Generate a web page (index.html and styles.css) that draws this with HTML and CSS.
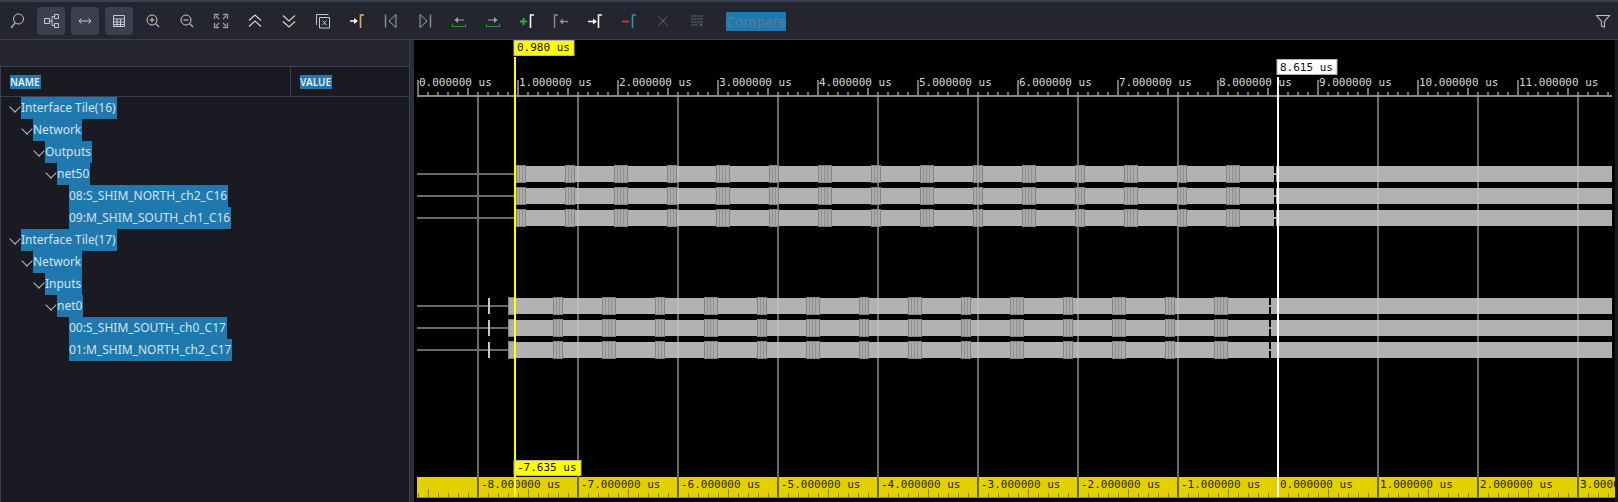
FILE: index.html
```html
<!DOCTYPE html>
<html lang="en">

<head>
    <meta charset="UTF-8">
    <meta name="viewport" content="width=device-width, initial-scale=1.0">
    <title>Waveform</title>
    <link rel="stylesheet" href="styles.css">
</head>

<body>
    <div class="app">
        <div class="toolbar">
            <button class="tool"><svg viewBox="0 0 20 20"><circle class="ic" cx="11.500" cy="8" r="5"/><path class="ic-blue" d="M8 12 4 17"/></svg></button>
            <button class="tool on"><svg viewBox="0 0 20 20"><path class="ic" d="M3.500 7.500h5v5h-5zM13.500 3.500h4v4h-4zM13.500 12.500h4v4h-4zM8.500 10h2.500M11 5.500h2.500M11 14.500h2.500M11 5.500v9"/></svg></button>
            <button class="tool on"><svg viewBox="0 0 20 20"><path class="ic" d="M4 10h12M6.500 7.500 4 10l2.500 2.500M13.500 7.500 16 10l-2.500 2.500"/></svg></button>
            <button class="tool on"><svg viewBox="0 0 20 20"><path class="ic" d="M4.500 4.500h11v11h-11zM4.500 8h11M4.500 11h11M4.500 13.500h11M8 8v7.500M11.500 8v7.500"/></svg></button>
            <button class="tool"><svg viewBox="0 0 20 20"><circle class="ic" cx="9" cy="9" r="5"/><path class="ic-orange" d="M6.500 9h5M9 6.500v5"/><path class="ic-blue" d="m12.500 12.500 3.500 3.500"/></svg></button>
            <button class="tool"><svg viewBox="0 0 20 20"><circle class="ic" cx="9" cy="9" r="5"/><path class="ic-orange" d="M6.500 9h5"/><path class="ic-blue" d="m12.500 12.500 3.500 3.500"/></svg></button>
            <button class="tool"><svg viewBox="0 0 20 20"><path class="ic-fit" d="M3.500 8V3.500H8M12 3.500h4.500V8M16.500 12v4.500H12M8 16.500H3.500V12M5 5l3 3M15 5l-3 3M15 15l-3-3M5 15l3-3"/></svg></button>
            <button class="tool"><svg viewBox="0 0 20 20"><path class="ic-cream" d="m4 9.500 6-5.500 6 5.500M4 15.500l6-5.500 6 5.500"/></svg></button>
            <button class="tool"><svg viewBox="0 0 20 20"><path class="ic-cream" d="m4 4.500 6 5.500 6-5.500M4 10.500l6 5.500 6-5.500"/></svg></button>
            <button class="tool"><svg viewBox="0 0 20 20"><path class="ic" d="M3.500 14V3.500h12M6.500 6.500h10v10.500h-10zM9.500 9.500l4 4.500M13.500 9.500l-4 4.500"/></svg></button>
            <button class="tool"><svg viewBox="0 0 20 20"><path class="ic-white" d="M3 10h5"/><path class="fill-white" d="m7 7 4 3-4 3z"/><path class="ic-gold" d="M13.500 17V4h3.500"/></svg></button>
            <button class="tool"><svg viewBox="0 0 20 20"><path class="ic-grey" d="M4.500 3.500v13"/><path class="ic-dim" d="M15 3.500v13L8 10z"/></svg></button>
            <button class="tool"><svg viewBox="0 0 20 20"><path class="ic-grey" d="M15.500 3.500v13"/><path class="ic-dim" d="M5 3.500v13L12 10z"/></svg></button>
            <button class="tool"><svg viewBox="0 0 20 20"><path class="ic-green" d="M3.500 12.500v3h13v-3"/><path class="ic-dim" d="M8 9h7"/><path class="fill-dim" d="M9 6 5.500 9 9 12z"/></svg></button>
            <button class="tool"><svg viewBox="0 0 20 20"><path class="ic-green" d="M3.500 12.500v3h13v-3"/><path class="ic-dim" d="M5 9h7"/><path class="fill-dim" d="m11 6 3.500 3-3.500 3z"/></svg></button>
            <button class="tool"><svg viewBox="0 0 20 20"><path class="ic-add" d="M3 10.500h7M6.500 7v7"/><path class="ic-white" d="M13.500 17V4h3.500"/></svg></button>
            <button class="tool"><svg viewBox="0 0 20 20"><path class="ic-grey" d="M3.500 17V4H7"/><path class="ic-grey" d="M10 10.500h7"/><path class="fill-grey" d="M12 7.500 8.500 10.500l3.500 3z"/></svg></button>
            <button class="tool"><svg viewBox="0 0 20 20"><path class="ic-white" d="M3 10.500h6"/><path class="fill-white" d="m8 7.500 4 3-4 3z"/><path class="ic-white" d="M13.500 17V4h3.500"/></svg></button>
            <button class="tool"><svg viewBox="0 0 20 20"><path class="ic-red" d="M3 10.500h7"/><path class="ic-teal" d="M13.500 17V4h3.500"/></svg></button>
            <button class="tool"><svg viewBox="0 0 20 20"><path class="ic-off" d="m5.500 5.500 9 9M14.500 5.500l-9 9"/></svg></button>
            <button class="tool"><svg viewBox="0 0 20 20"><path class="ic-off" d="M4 5h12M4 8h12M4 11h12M4 14h7M12.500 12.500l3 3M15.500 12.500l-3 3"/></svg></button>
            <span class="compare">Compare</span>
            <button class="tool filter"><svg viewBox="0 0 20 20"><path class="ic-filter" d="M3.500 4.500h13L11.500 10.500v5.500l-3-1v-4.500z"/></svg></button>
        </div>

        <div class="main">
            <div class="left">
                <div class="table-head">
                    <div class="col-name"><span class="sel">NAME</span></div>
                    <div class="col-value"><span class="sel">VALUE</span></div>
                </div>
                <div class="tree">
                    <div class="row lv0"><i class="chev"></i><span class="sel">Interface Tile(16)</span></div>
                    <div class="row lv1"><i class="chev"></i><span class="sel">Network</span></div>
                    <div class="row lv2"><i class="chev"></i><span class="sel">Outputs</span></div>
                    <div class="row lv3"><i class="chev"></i><span class="sel">net50</span></div>
                    <div class="row lv4"><span class="sel">08:S_SHIM_NORTH_ch2_C16</span></div>
                    <div class="row lv4"><span class="sel">09:M_SHIM_SOUTH_ch1_C16</span></div>
                    <div class="row lv0"><i class="chev"></i><span class="sel">Interface Tile(17)</span></div>
                    <div class="row lv1"><i class="chev"></i><span class="sel">Network</span></div>
                    <div class="row lv2"><i class="chev"></i><span class="sel">Inputs</span></div>
                    <div class="row lv3"><i class="chev"></i><span class="sel">net0</span></div>
                    <div class="row lv4"><span class="sel">00:S_SHIM_SOUTH_ch0_C17</span></div>
                    <div class="row lv4"><span class="sel">01:M_SHIM_NORTH_ch2_C17</span></div>
                </div>
            </div>
            <div class="gutter"></div>

            <!-- viewBox uses page coordinates, easier to check against the screenshot -->
            <svg class="wave" viewBox="414 40 1201 462" width="1201" height="462">
                <defs>
                    <pattern id="ticks-top" x="417" y="80" width="100" height="16" patternUnits="userSpaceOnUse">
                        <path class="tick-top" d="M1 0v16M11 12v4M21 12v4M31 12v4M41 12v4M51 8v8M61 12v4M71 12v4M81 12v4M91 12v4"/>
                    </pattern>
                    <pattern id="ticks-bottom" x="418" y="489" width="100" height="8" patternUnits="userSpaceOnUse">
                        <path class="tick-bottom" d="M.5 4v4M10.500 0v8M20.500 4v4M30.500 4v4M40.500 4v4M50.500 4v4M60.500 4v4M70.500 4v4M80.500 4v4M90.500 4v4"/>
                    </pattern>
                    <clipPath id="bottom-clip"><rect x="417" y="477" width="1198" height="20"/></clipPath>

                    <g id="c10">
                        <rect class="cl" x=".5" y="-.5" width="9" height="17"/>
                        <path class="cl-in" d="M3.500 0v16M6.500 0v16"/>
                    </g>
                    <g id="c14">
                        <rect class="cl" x=".5" y="-.5" width="13" height="17"/>
                        <path class="cl-in" d="M3.500 0v16M6.500 0v16M9.500 0v16"/>
                    </g>

                    <g id="row-a">
                        <rect class="sig" x="417" y="7" width="98" height="2"/>
                        <rect class="bar" x="516" y="0" width="758" height="16"/>
                        <rect class="bar" x="1274" y="7" width="2" height="2"/>
                        <rect class="bar" x="1276" y="0" width="336" height="16"/>
                        <path class="bar-grid" d="M578 0v16M678 0v16M778 0v16M878 0v16M978 0v16M1078 0v16M1178 0v16M1378 0v16M1478 0v16M1578 0v16"/>
                        <use href="#c10" x="516"/><use href="#c10" x="565"/><use href="#c14" x="614"/>
                        <use href="#c10" x="667"/><use href="#c14" x="716"/><use href="#c10" x="769"/>
                        <use href="#c14" x="818"/><use href="#c10" x="871"/><use href="#c14" x="920"/>
                        <use href="#c10" x="973"/><use href="#c14" x="1022"/><use href="#c10" x="1075"/>
                        <use href="#c14" x="1124"/><use href="#c10" x="1177"/><use href="#c14" x="1226"/>
                    </g>
                    <g id="row-b">
                        <rect class="sig" x="417" y="7" width="91" height="2"/>
                        <rect class="mark" x="488" y="0" width="2" height="16"/>
                        <rect class="bar" x="508" y="0" width="761" height="16"/>
                        <rect class="bar" x="1269" y="7" width="2" height="2"/>
                        <rect class="bar" x="1271" y="0" width="341" height="16"/>
                        <path class="bar-grid" d="M578 0v16M678 0v16M778 0v16M878 0v16M978 0v16M1078 0v16M1178 0v16M1378 0v16M1478 0v16M1578 0v16"/>
                        <rect class="cl" x="508.500" y="-.5" width="6" height="17"/>
                        <use href="#c10" x="553"/><use href="#c14" x="602"/><use href="#c10" x="655"/>
                        <use href="#c14" x="704"/><use href="#c10" x="757"/><use href="#c14" x="806"/>
                        <use href="#c10" x="859"/><use href="#c14" x="908"/><use href="#c10" x="961"/>
                        <use href="#c14" x="1010"/><use href="#c10" x="1063"/><use href="#c14" x="1112"/>
                        <use href="#c10" x="1165"/><use href="#c14" x="1214"/>
                    </g>
                </defs>

                <!-- top ruler -->
                <text class="ruler" x="419" y="86">0.000000 us</text>
                <text class="ruler" x="519" y="86">1.000000 us</text>
                <text class="ruler" x="619" y="86">2.000000 us</text>
                <text class="ruler" x="719" y="86">3.000000 us</text>
                <text class="ruler" x="819" y="86">4.000000 us</text>
                <text class="ruler" x="919" y="86">5.000000 us</text>
                <text class="ruler" x="1019" y="86">6.000000 us</text>
                <text class="ruler" x="1119" y="86">7.000000 us</text>
                <text class="ruler" x="1219" y="86">8.000000 us</text>
                <text class="ruler" x="1319" y="86">9.000000 us</text>
                <text class="ruler" x="1419" y="86">10.000000 us</text>
                <text class="ruler" x="1519" y="86">11.000000 us</text>
                <rect x="417" y="80" width="1195" height="16" fill="url(#ticks-top)"/>
                <rect class="ruler-line" x="417" y="95" width="1195" height="2"/>

                <!-- bottom ruler -->
                <rect class="band" x="417" y="477" width="1198" height="20"/>
                <rect x="417" y="489" width="1198" height="8" fill="url(#ticks-bottom)"/>
                <rect class="band-line" x="417" y="497" width="1198" height="1"/>

                <path class="grid" d="M478 97V497M578 97V497M678 97V497M778 97V497M878 97V497M978 97V497M1078 97V497M1178 97V497M1378 97V497M1478 97V497M1578 97V497"/>

                <g clip-path="url(#bottom-clip)">
                    <text class="ruler-dark" x="481" y="488">-8.000000 us</text>
                    <text class="ruler-dark" x="581" y="488">-7.000000 us</text>
                    <text class="ruler-dark" x="681" y="488">-6.000000 us</text>
                    <text class="ruler-dark" x="781" y="488">-5.000000 us</text>
                    <text class="ruler-dark" x="881" y="488">-4.000000 us</text>
                    <text class="ruler-dark" x="981" y="488">-3.000000 us</text>
                    <text class="ruler-dark" x="1081" y="488">-2.000000 us</text>
                    <text class="ruler-dark" x="1181" y="488">-1.000000 us</text>
                    <text class="ruler-dark" x="1280" y="488">0.000000 us</text>
                    <text class="ruler-dark" x="1380" y="488">1.000000 us</text>
                    <text class="ruler-dark" x="1480" y="488">2.000000 us</text>
                    <text class="ruler-dark" x="1580" y="488">3.000000 us</text>
                </g>

                <!-- waves -->
                <use href="#row-a" y="166"/>
                <use href="#row-a" y="188"/>
                <use href="#row-a" y="210"/>
                <use href="#row-b" y="298"/>
                <use href="#row-b" y="320"/>
                <use href="#row-b" y="342"/>

                <!-- markers -->
                <rect class="cursor-y" x="514" y="57" width="2" height="440"/>
                <rect class="cursor-w" x="1277" y="77" width="2" height="420"/>

                <rect class="tip-y" x="514" y="40.500" width="60" height="15"/>
                <text class="tip-text" x="517" y="51">0.980 us</text>
                <rect class="tip-w" x="1277" y="59.500" width="60" height="15"/>
                <text class="tip-text" x="1280" y="71">8.615 us</text>
                <rect class="tip-y" x="514" y="460.500" width="67" height="15"/>
                <text class="tip-text" x="517" y="471">-7.635 us</text>
            </svg>
        </div>
    </div>
</body>

</html>
```

FILE: styles.css
```css
html,
body {
    margin: 0;
    padding: 0;
    height: 100%;
    background-color: #1a1b22;
    overflow: hidden;
}

.app {
    display: flex;
    flex-direction: column;
    width: 1618px;
    height: 502px;
    font-family: "Noto Sans", sans-serif;
}

/* toolbar */
.toolbar {
    box-sizing: border-box;
    display: flex;
    align-items: center;
    gap: 6px;
    height: 40px;
    padding: 1px 1px 0 3px;
    background-color: #24252f;
    border-top: 2px solid #3b3f50;
    border-bottom: 1px solid #3b3f50;
}

.tool {
    display: flex;
    align-items: center;
    justify-content: center;
    flex: none;
    width: 28px;
    height: 28px;
    padding: 0;
    border: none;
    border-radius: 4px;
    background: none;
}

.tool svg {
    width: 20px;
    height: 20px;
    fill: none;
}

.tool.on {
    background-color: #3b4050;
}

.tool.filter {
    margin-left: auto;
}

.compare {
    margin-left: 9px;
    height: 19px;
    line-height: 19px;
    font-size: 14px;
    color: #557f9f;
    background-color: #1f78ae;
}

.ic { stroke: #c4c8d0; stroke-width: 1; }
.ic-blue { stroke: #8fb6d4; stroke-width: 1.4; }
.ic-orange { stroke: #d9b98a; stroke-width: 1.2; }
.ic-fit { stroke: #9a9da6; stroke-width: 1.3; }
.ic-grey { stroke: #8b8e98; stroke-width: 1.4; }
.ic-dim { stroke: #a0a3ac; stroke-width: 1; }
.ic-off { stroke: #5d606b; stroke-width: 1; }
.ic-cream { stroke: #d6d6c8; stroke-width: 1.1; }
.ic-white { stroke: #f2f2f2; stroke-width: 1.6; }
.ic-gold { stroke: #d2b450; stroke-width: 1.6; }
.ic-green { stroke: #3b8a3b; stroke-width: 1.1; }
.ic-add { stroke: #2fa84a; stroke-width: 2; }
.ic-red { stroke: #d0313d; stroke-width: 2; }
.ic-teal { stroke: #2f8fb0; stroke-width: 1.6; }
.ic-filter { stroke: #b4c0d0; stroke-width: 1.1; }
.fill-white { fill: #f2f2f2; }
.fill-dim { fill: #a0a3ac; }
.fill-grey { fill: #8b8e98; }

/* main area */
.main {
    display: flex;
    flex: 1;
    min-height: 0;
}

.left {
    box-sizing: border-box;
    width: 410px;
    padding-top: 26px;
    background-color: #24252f;
    border-right: 1px solid #3b3f50;
}

.table-head {
    box-sizing: border-box;
    display: flex;
    height: 31px;
    background-color: #1a1b22;
    border-top: 1px solid #3b3f50;
    border-bottom: 1px solid #3b3f50;
    border-left: 1px solid #3b3f50;
    font-size: 10px;
    font-weight: 600;
    line-height: 14px;
    color: #e8edf2;
}

.col-name {
    display: flex;
    align-items: center;
    width: 290px;
    padding-left: 9px;
    box-sizing: border-box;
    border-right: 1px solid #3b3f50;
}

.col-value {
    display: flex;
    align-items: center;
    padding-left: 9px;
}

.sel {
    background-color: #1f78ae;
}

.table-head .sel {
    padding-right: 1px;
    height: 14px;
}

.tree {
    height: 405px;
    background-color: #1a1b22;
    border-left: 1px solid #3b3f50;
}

.row {
    display: flex;
    align-items: center;
    height: 22px;
    font-size: 12px;
    color: #d5e3ee;
}

.row .sel {
    display: inline-block;
    height: 22px;
    line-height: 22px;
    padding-right: 1px;
    white-space: pre;
}

.lv0 { padding-left: 9px; }
.lv1 { padding-left: 21px; }
.lv2 { padding-left: 33px; }
.lv3 { padding-left: 45px; }
.lv4 { padding-left: 68px; }

.chev {
    flex: none;
    box-sizing: border-box;
    width: 8px;
    height: 8px;
    margin: 0 2px 0 1px;
    border-right: 1px solid #b8bcc4;
    border-bottom: 1px solid #b8bcc4;
    transform: translateY(-1px) rotate(45deg);
}

.gutter {
    width: 4px;
    background-color: #2a2f40;
}

/* waveform */
.wave {
    display: block;
    flex: none;
    background-color: #000;
}

.ruler,
.ruler-dark,
.tip-text {
    font-family: "DejaVu Sans Mono", monospace;
    font-size: 11px;
}

.ruler { fill: #d8d8d8; }
.ruler-dark { fill: #2a2600; }
.tip-text { fill: #111; }

.tick-top { stroke: #9c9c9c; stroke-width: 1.5; }
.tick-bottom { stroke: #8a7e10; stroke-width: 1; }
.ruler-line { fill: #8a8a8a; }
.band { fill: #e2d000; }
.band-line { fill: #8c8850; }
.grid { stroke: #696969; stroke-width: 2; fill: none; }

.sig { fill: #6a6a6a; }
.mark { fill: #c8c8c8; }
.bar { fill: #b2b2b2; }
.bar-grid { stroke: #bcbcbc; stroke-width: 2; }
.cl { fill: #ababab; stroke: #838383; stroke-width: 1; }
.cl-in { stroke: #919191; stroke-width: 1; }

.cursor-y { fill: #ffff00; }
.cursor-w { fill: #fff; }
.tip-y { fill: #ffff00; stroke: #b8b8a0; stroke-width: 1; }
.tip-w { fill: #fff; stroke: #b0b0b0; stroke-width: 1; }
```
